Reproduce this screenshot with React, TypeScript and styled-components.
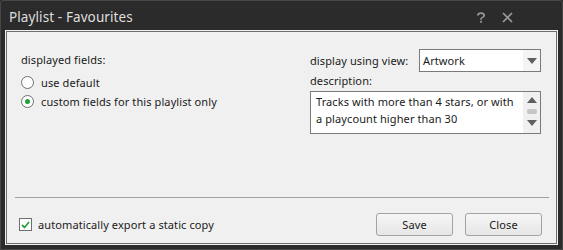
import React from 'react'
import styled, { createGlobalStyle } from 'styled-components'

const GlobalStyle = createGlobalStyle`
  html, body {
    margin: 0;
    padding: 0;
    background: #2b2b2b;
  }
  * {
    box-sizing: border-box;
  }
`

const Window = styled.div`
  width: 563px;
  height: 250px;
  background: #2b2b2b;
  border: 1px solid #474747;
  border-radius: 3px 3px 0 0;
  display: flex;
  flex-direction: column;
  font-family: 'Noto Sans', 'Open Sans', sans-serif;
  font-size: 11px;
  letter-spacing: 0.1px;
  color: #1a1a1a;
`

const TitleBar = styled.div`
  height: 29px;
  display: flex;
  align-items: center;
  padding: 0 0 0 8px;
`

const Title = styled.div`
  flex: 1;
  color: #dedede;
  font-size: 13.5px;
  letter-spacing: 0.1px;
  margin-top: 2px;
`

const TitleButton = styled.div<{ $gap?: number }>`
  width: 26px;
  height: 29px;
  display: flex;
  align-items: center;
  justify-content: center;
  margin-top: 3px;
  margin-right: ${(p) => p.$gap ?? 0}px;
`

const Panel = styled.div`
  flex: 1;
  margin: 0 4px 4px 4px;
  padding: 1px;
  background: #f0f0f0;
  display: flex;
`

const Inner = styled.div`
  flex: 1;
  border: 1px solid #6e6e6e;
  display: flex;
  flex-direction: column;
`

const Top = styled.div`
  height: 165px;
  display: flex;
  padding: 17px 15px 0 14px;
`

const LeftColumn = styled.div`
  flex: 1;
  padding-top: 3px;
`

const RightColumn = styled.div`
  width: 231px;
  display: flex;
  flex-direction: column;
`

const Label = styled.div`
  height: 16px;
  line-height: 16px;
  white-space: nowrap;
`

const OptionRow = styled.label<{ $first?: boolean }>`
  display: flex;
  align-items: center;
  height: 19px;
  gap: 7px;
  margin-top: ${(p) => (p.$first ? 5 : 0)}px;
  white-space: nowrap;
`

const Radio = styled.span<{ $checked?: boolean }>`
  width: 13px;
  height: 13px;
  border-radius: 50%;
  border: 1px solid #6f6f6f;
  background: #fff;
  display: flex;
  align-items: center;
  justify-content: center;
  &::after {
    content: '';
    width: 5px;
    height: 5px;
    border-radius: 50%;
    background: ${(p) => (p.$checked ? '#22a33a' : 'transparent')};
  }
`

const ViewRow = styled.div`
  display: flex;
  align-items: center;
  justify-content: space-between;
  height: 23px;
`

const Select = styled.div`
  width: 122px;
  height: 23px;
  border: 1px solid #7a7a7a;
  background: #fff;
  display: flex;
  align-items: center;
`

const SelectValue = styled.div`
  flex: 1;
  padding-left: 3px;
`

const ArrowBox = styled.div`
  width: 17px;
  height: 100%;
  display: flex;
  align-items: center;
  justify-content: center;
  background: #f4f4f4;
`

const DescLabel = styled(Label)`
  margin-top: 1px;
`

const TextArea = styled.div`
  margin-top: 2px;
  height: 43px;
  border: 1px solid #7a7a7a;
  background: #fff;
  display: flex;
`

const TextContent = styled.div`
  flex: 1;
  padding: 1px 5px;
  line-height: 17px;
`

const ScrollBar = styled.div`
  width: 17px;
  background: #f0f0f0;
  display: flex;
  flex-direction: column;
  align-items: center;
  justify-content: space-between;
  padding: 5px 0 7px;
`

const Thumb = styled.div`
  width: 10px;
  height: 5px;
  border-radius: 2px;
  background: #c6c6c6;
`

const Separator = styled.div`
  height: 1px;
  margin: 0 7px 0 8px;
  background: #a0a0a0;
`

const Footer = styled.div`
  display: flex;
  align-items: center;
  padding: 15px 14px 7px 12px;
  gap: 12px;
`

const CheckRow = styled.label`
  flex: 1;
  display: flex;
  align-items: center;
  gap: 6px;
  white-space: nowrap;
`

const CheckBox = styled.span`
  width: 13px;
  height: 13px;
  border: 1px solid #6f6f6f;
  background: #fff;
  display: flex;
  align-items: center;
  justify-content: center;
`

const Button = styled.button`
  width: 77px;
  height: 23px;
  border: 1px solid #a3a3a3;
  border-radius: 3px;
  background: linear-gradient(#f6f6f6, #e6e6e6);
  font-family: inherit;
  font-size: 11px;
  letter-spacing: 0.1px;
  color: #1a1a1a;
  padding: 0;
`

const Triangle = ({ up }: { up?: boolean }) => (
  <svg width="10" height="6" viewBox="0 0 10 6">
    <path d={up ? 'M0 6 L5 0 L10 6 Z' : 'M0 0 L10 0 L5 6 Z'} fill="#5f5f5f" />
  </svg>
)

export default function App() {
  return (
    <>
      <GlobalStyle />
      <Window>
        <TitleBar>
          <Title>Playlist - Favourites</Title>
          <TitleButton>
            <svg width="10" height="11" viewBox="0 0 10 11">
              <path
                d="M1 3.4 C1 1.3 2.8 0.3 5 0.3 C7.3 0.3 9 1.4 9 3.3 C9 5.1 7.3 5.6 6.4 6.3 C5.9 6.7 5.8 7.1 5.8 7.8 L4.1 7.8 C4.1 6.8 4.4 6 5.3 5.4 C6.6 4.6 7.2 4.3 7.2 3.3 C7.2 2.4 6.3 1.9 5 1.9 C3.7 1.9 2.8 2.4 2.8 3.4 Z"
                fill="#9b9b9b"
              />
              <rect x="4.1" y="8.8" width="1.8" height="1.9" fill="#9b9b9b" />
            </svg>
          </TitleButton>
          <TitleButton $gap={42}>
            <svg width="11" height="11" viewBox="0 0 11 11">
              <path d="M1 1 L10 10 M10 1 L1 10" stroke="#9b9b9b" strokeWidth="1.7" />
            </svg>
          </TitleButton>
        </TitleBar>
        <Panel>
          <Inner>
            <Top>
              <LeftColumn>
                <Label>displayed fields:</Label>
                <OptionRow $first>
                  <Radio />
                  use default
                </OptionRow>
                <OptionRow>
                  <Radio $checked />
                  custom fields for this playlist only
                </OptionRow>
              </LeftColumn>
              <RightColumn>
                <ViewRow>
                  <Label>display using view:</Label>
                  <Select>
                    <SelectValue>Artwork</SelectValue>
                    <ArrowBox>
                      <Triangle />
                    </ArrowBox>
                  </Select>
                </ViewRow>
                <DescLabel>description:</DescLabel>
                <TextArea>
                  <TextContent>
                    Tracks with more than 4 stars, or with a playcount higher than 30
                  </TextContent>
                  <ScrollBar>
                    <Triangle up />
                    <Thumb />
                    <Triangle />
                  </ScrollBar>
                </TextArea>
              </RightColumn>
            </Top>
            <Separator />
            <Footer>
              <CheckRow>
                <CheckBox>
                  <svg width="9" height="8" viewBox="0 0 9 8">
                    <path d="M1 4 L3.5 6.5 L8 1" stroke="#27a33b" strokeWidth="1.8" fill="none" />
                  </svg>
                </CheckBox>
                automatically export a static copy
              </CheckRow>
              <Button>Save</Button>
              <Button>Close</Button>
            </Footer>
          </Inner>
        </Panel>
      </Window>
    </>
  )
}
